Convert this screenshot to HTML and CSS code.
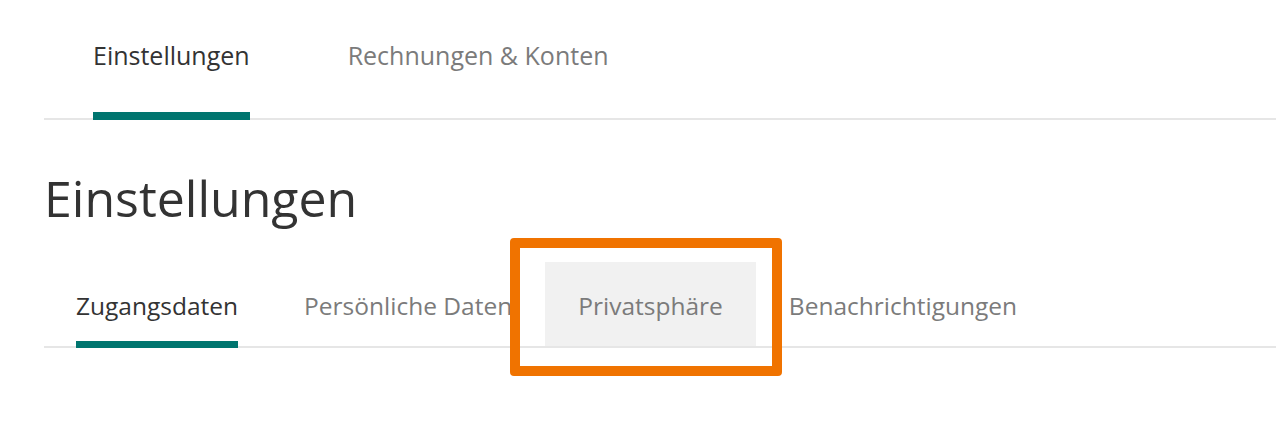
FILE: index.html
```html
<!DOCTYPE html>
<html lang="de">
<head>
    <meta charset="UTF-8">
    <meta name="viewport" content="width=device-width, initial-scale=1.0">
    <title>Einstellungen</title>
    <link rel="stylesheet" href="styles.css">
</head>
<body>
    <div class="page">
        <!-- Main navigation -->
        <nav class="main-nav">
            <a href="#" class="main-tab active"><span class="label">Einstellungen</span></a>
            <a href="#" class="main-tab"><span class="label">Rechnungen &amp; Konten</span></a>
        </nav>

        <h1 class="title">Einstellungen</h1>

        <!-- Settings tabs -->
        <div class="sub-wrap">
            <nav class="sub-nav">
                <a href="#" class="sub-tab active"><span class="label">Zugangsdaten</span></a>
                <a href="#" class="sub-tab"><span class="label">Persönliche Daten</span></a>
                <a href="#" class="sub-tab hover"><span class="label">Privatsphäre</span></a>
                <a href="#" class="sub-tab"><span class="label">Benachrichtigungen</span></a>
            </nav>
            <div class="highlight"></div>
        </div>
    </div>
</body>
</html>
```

FILE: styles.css
```css
body {
    margin: 0;
    padding: 0;
    background: #ffffff;
    font-family: "Open Sans", Arial, sans-serif;
    color: #333333;
}
.page {
    padding-left: 44px;
    min-height: 422px;
}
a {
    text-decoration: none;
}
.main-nav {
    display: flex;
    border-bottom: 2px solid #e6e6e6;
}
.main-tab {
    padding: 40px 49px 0;
    font-size: 25px;
    line-height: 30px;
    color: #7b7b7b;
}
.main-tab .label {
    display: block;
    padding-bottom: 42px;
    border-bottom: 8px solid transparent;
    margin-bottom: -2px;
}
.main-tab.active {
    color: #333333;
}
.main-tab.active .label {
    border-bottom-color: #00756f;
}
.title {
    margin: 50px 0 0;
    font-size: 50px;
    line-height: 56px;
    font-weight: normal;
    color: #333333;
}
.sub-wrap {
    position: relative;
    margin-top: 36px;
    padding-bottom: 40px;
}
.sub-nav {
    display: flex;
    border-bottom: 2px solid #e6e6e6;
}
.sub-tab {
    padding: 29px 33px 0;
    font-size: 24.5px;
    line-height: 30px;
    color: #7b7b7b;
}
.sub-tab:first-child {
    padding-left: 32px;
}
.sub-tab .label {
    display: block;
    padding-bottom: 20px;
    border-bottom: 7px solid transparent;
    margin-bottom: -2px;
}
.sub-tab.active {
    color: #333333;
}
.sub-tab.active .label {
    border-bottom-color: #00756f;
}
.sub-tab.hover {
    background: #f1f1f1;
}
.highlight {
    position: absolute;
    left: 466px;
    top: -24px;
    width: 272px;
    height: 138px;
    box-sizing: border-box;
    border: 10px solid #f07300;
    border-radius: 4px;
}
```
